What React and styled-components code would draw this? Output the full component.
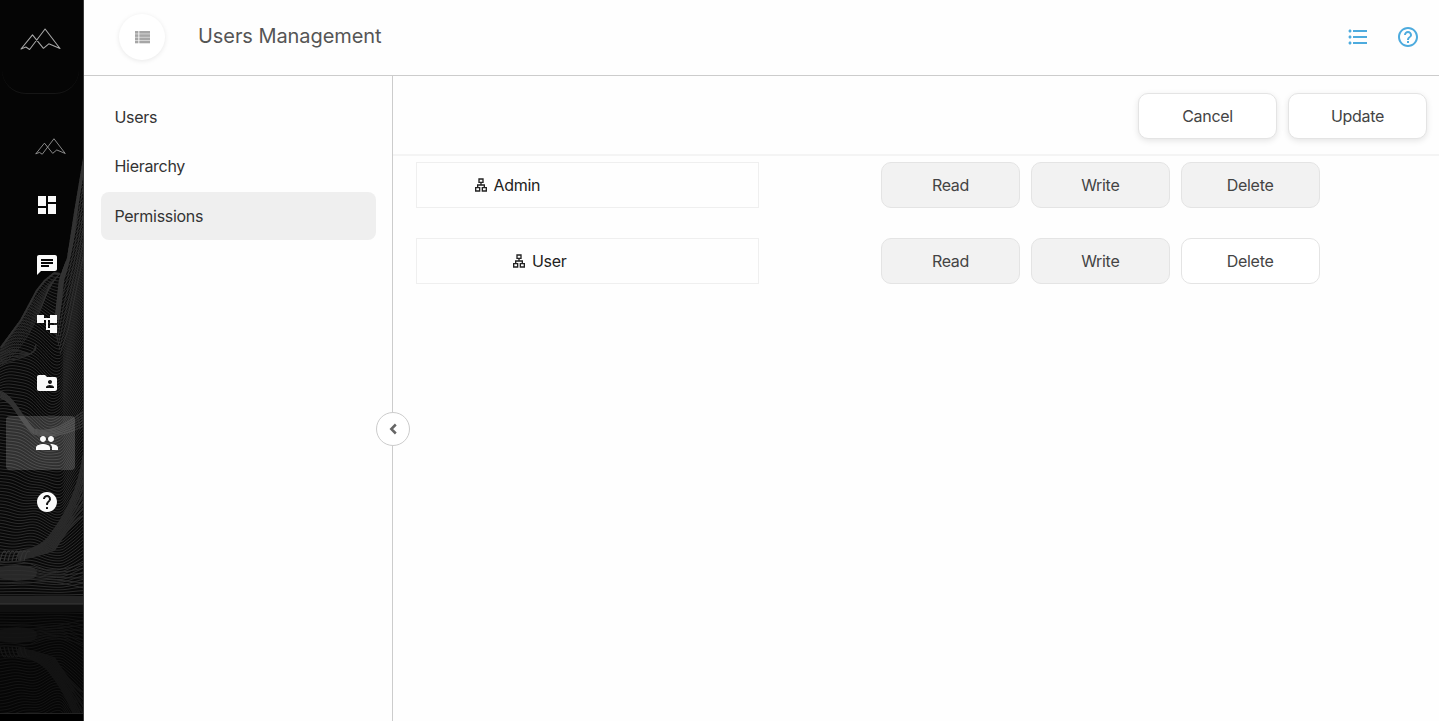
import React, { useState } from 'react';
import styled, { createGlobalStyle } from 'styled-components';
import {
  MdDashboard, MdChat, MdAccountTree, MdFolderShared, MdPeople, MdHelp,
  MdHelpOutline, MdFormatListBulleted, MdOutlineLan,
} from 'react-icons/md';

const GlobalStyle = createGlobalStyle`
  * { box-sizing: border-box; }
  body { margin: 0; background: #fefefe; font-family: Inter, 'Liberation Sans', sans-serif; letter-spacing: -0.3px; color: #333; }
  button { font-family: inherit; letter-spacing: inherit; cursor: pointer; }
`;

const Layout = styled.div`
  display: flex;
  width: 100%; height: 100vh;
  overflow: hidden;
`;

const Sidebar = styled.aside`
  position: relative;
  flex: 0 0 84px;
  background: #050505;
  border-right: 1px solid #3a3a3a;
  overflow: hidden;
`;

const Backdrop = styled.svg`
  position: absolute; top: 0; left: 0;
  width: 84px; height: 721px;
`;

const Brand = styled.div`
  position: relative;
  display: flex; justify-content: center; align-items: center;
  width: 77px; height: 94px;
  margin-left: 2px;
  padding: 0 1px 14px 0;
  border-bottom: 1px solid #161616;
  border-radius: 0 0 24px 24px;
`;

const Menu = styled.nav`
  position: relative;
  display: flex; flex-direction: column;
  gap: 5px;
  padding: 26px 8px 0 6px;
`;

const MenuItem = styled.a`
  display: flex; justify-content: center; align-items: center;
  height: ${props => (props.$logo ? '53px' : '54.4px')};
  padding-left: ${props => (props.$logo ? '20px' : '13px')};
  border-radius: 4px;
  color: #fafafa;
  background: ${props => (props.$active ? 'rgba(255, 255, 255, 0.17)' : 'transparent')};
`;

const Main = styled.div`
  flex: 1;
  display: flex; flex-direction: column;
  min-width: 0;
`;

const Header = styled.header`
  display: flex; align-items: center;
  height: 76px;
  padding: 0 19px 1px 35px;
  border-bottom: 1px solid #ccc;
`;

const RoundButton = styled.button`
  display: flex; justify-content: center; align-items: center;
  width: 46px; height: 46px;
  padding: 0;
  border: none; border-radius: 50%;
  background: #fff;
  color: #a6a6a6;
  box-shadow: 0 1px 5px rgba(0, 0, 0, 0.09);
`;

const Title = styled.h1`
  flex: 1;
  margin: 0 0 2px 33px;
  font-size: 20px; font-weight: 400;
  letter-spacing: -0.07px;
  color: #555;
`;

const HeaderActions = styled.div`
  display: flex; gap: 26px;
  color: #4dabde;
`;

const Body = styled.div`
  flex: 1;
  display: flex;
  min-height: 0;
`;

const Panel = styled.div`
  position: relative;
  flex: 0 0 309px;
  display: flex; flex-direction: column;
  gap: 1.3px;
  padding: 16.5px 16px 0 17px;
  border-right: 1px solid #ccc;
`;

const PanelItem = styled.div`
  display: flex; align-items: center;
  height: 48.3px;
  padding-left: 13.5px;
  border-radius: 8px;
  font-size: 16px;
  cursor: pointer;
  background: ${props => (props.$active ? '#efefef' : 'transparent')};
`;

const CollapseButton = styled.button`
  position: absolute; top: 336px; right: -18px;
  display: flex; justify-content: center; align-items: center;
  width: 34px; height: 34px;
  padding: 0;
  border: 1px solid #ccc; border-radius: 50%;
  background: #fff;
  color: #666;
`;

const Content = styled.main`
  flex: 1;
  min-width: 0;
`;

const Toolbar = styled.div`
  display: flex; justify-content: flex-end; align-items: center;
  gap: 11px;
  height: 80px;
  padding: 2px 12px 0 0;
  border-bottom: 2px solid #f4f4f4;
`;

const Button = styled.button`
  width: 139px; height: 46px;
  padding: 0;
  border: 1px solid #e4e4e4;
  border-radius: 10px;
  background: ${props => (props.$on ? '#f2f2f2' : '#fff')};
  box-shadow: ${props => (props.$raised ? '0 2px 6px rgba(0, 0, 0, 0.1)' : 'none')};
  font-size: 16px;
  color: #444;
`;

const RoleList = styled.div`
  display: flex; flex-direction: column;
  gap: 30px;
  padding: 6px 0 0 23px;
`;

const RoleRow = styled.div`
  display: flex; align-items: center;
`;

const RoleCard = styled.div`
  display: flex; align-items: center;
  gap: 5px;
  width: 343px; height: 46px;
  padding-left: ${props => 17 + props.$level * 38.5}px;
  border: 1px solid #efefef;
  font-size: 16px;
  color: #222;
`;

const Permissions = styled.div`
  display: flex;
  gap: 10.8px;
  margin-left: 122px;
`;

const Peaks = ({ width }) => (
  <svg width={width} viewBox="0 0 42 23" fill="none" stroke="currentColor" strokeWidth="1.1" strokeLinejoin="round" color="#a8a8a8">
    <path d="M1 21.5 L12.8 7 L24 20.8 L29.5 16.2 L41 21 L25.7 1 L9.8 22 L6 19.5 Z" />
  </svg>
);

const ListRows = () => (
  <svg width="15" height="13" viewBox="0 0 15 13" fill="currentColor">
    {[0, 3.2, 6.4, 9.6].map(y => (
      <g key={y}>
        <rect x="0" y={y} width="3.4" height="2.7" />
        <rect x="4.3" y={y} width="10.7" height="2.7" />
      </g>
    ))}
  </svg>
);

// contour lines of the landscape, flattening out towards the horizon
const contour = (base) => {
  const calm = Math.max(0, Math.min(1, (596 - base) / 110));
  const pts = [];
  for (let x = 0; x <= 84; x += 3) {
    const dip = 17 * Math.exp(-((x - 56) ** 2) / 380);
    const roll = 3.5 * Math.sin(x / 10 + base / 41) + 1.2 * Math.sin(x / 5 + base / 23);
    const slope = Math.max(0, x - 62) * -1.1;
    pts.push(`${x} ${(base + (dip + roll + slope) * calm).toFixed(1)}`);
  }
  return `M${pts.join(' L')}`;
};

const contours = [];
for (let y = 170; y < 604; y += 3.1) contours.push(contour(y));

// a ridge is a bundle of thin strands that fan out along its way
const strands = (count, draw) => Array.from({ length: count }, (_, i) => draw(i));

const Landscape = () => (
  <Backdrop viewBox="0 0 84 721" fill="none">
    <defs>
      <clipPath id="hills">
        <path d="M84 152 L74 212 L67 258 L61 273 L54 272 L44 280 L36 290 L20 320 L0 347 V604 H84 Z" />
      </clipPath>
      <clipPath id="water"><rect y="604" width="84" height="109" /></clipPath>
      <g id="terrain" clipPath="url(#hills)">
        <rect width="84" height="604" fill="#080808" />
        {contours.map((d, i) => <path key={i} d={d} stroke="#353535" strokeWidth="0.8" />)}
        <path d="M84 152 L76 206 Q70 258 62 278 L57 320" stroke="#323232" strokeWidth="5" />
        {strands(7, i => (
          <path key={i} d={`M84 ${168 + i * 14} Q${71 + i} ${250 + i * 6} ${59 + i * 1.5} ${282 + i * 8} L${54 + i} ${330 + i * 4}`} stroke="#363636" strokeWidth="0.8" />
        ))}
        <path d="M60 273 L54 272 L44 280 L36 290 L20 320 L0 347" stroke="#303030" strokeWidth="4" />
        {strands(12, i => (
          <path key={i} d={`M${60 - i} ${274 + i} Q${38 - i * 0.5} ${288 + i * 5} ${0} ${350 + i * 1.5}`} stroke="#303030" strokeWidth="0.7" />
        ))}
        {strands(6, i => (
          <path key={i} d={`M0 ${354 + i * 2} Q14 ${346 + i * 3} 24 ${352 + i} T36 ${344 + i}`} stroke="#2e2e2e" strokeWidth="0.9" />
        ))}
        {strands(6, i => (
          <path key={i} d={`M0 ${391 + i * 1.3} C14 ${396 + i} 22 ${418 + i * 1.6} 34 ${429 + i} C50 ${434 + i} 66 ${424 + i * 2} 84 ${411 + i * 3}`} stroke="#333" strokeWidth="1.3" />
        ))}
        {strands(9, i => (
          <path key={i} d={`M84 ${452 + i * 8} C78 ${492 + i * 3} 66 ${515 + i * 2} ${48 + i * 0.8} ${538 + i * 1.5} C38 ${548 + i} 28 ${550 + i} 18 ${552 + i}`} stroke="#2b2b2b" strokeWidth="1.7" />
        ))}
        {strands(7, i => (
          <path key={i} d={`M${i * 4} 561 Q${i * 4 + 3} 548 ${i * 4 + 6} 552`} stroke="#353535" strokeWidth="1.2" />
        ))}
        <path d="M0 568 Q18 562 34 568 Q40 573 34 578 Q16 584 0 578 Z" fill="#282828" />
        {strands(6, i => (
          <path key={i} d={`M0 ${563 + i * 4} Q24 ${559 + i * 5} 38 ${567 + i * 3} T84 ${563 + i * 5}`} stroke="#303030" strokeWidth="0.9" />
        ))}
        <rect y="596" width="84" height="8" fill="#242424" />
      </g>
    </defs>
    <use href="#terrain" />
    <g clipPath="url(#water)">
      <use href="#terrain" transform="translate(0 1208) scale(1 -1)" opacity="0.38" />
    </g>
    <path d="M0 604 H84" stroke="#393939" strokeWidth="1.2" />
    <path d="M0 713.5 H84" stroke="#222" />
    <rect y="714" width="84" height="7" fill="#000" />
  </Backdrop>
);

const menu = [MdDashboard, MdChat, MdAccountTree, MdFolderShared, MdPeople, MdHelp];

const App = () => {
  const [section, setSection] = useState('Permissions');
  const [roles, setRoles] = useState([
    { name: 'Admin', level: 1, rights: { Read: true, Write: true, Delete: true } },
    { name: 'User', level: 2, rights: { Read: true, Write: true, Delete: false } },
  ]);

  const toggle = (name, right) => {
    setRoles(roles.map(r => (r.name === name ? { ...r, rights: { ...r.rights, [right]: !r.rights[right] } } : r)));
  };

  return (
    <Layout>
      <GlobalStyle />
      <Sidebar>
        <Landscape />
        <Brand><Peaks width={41} /></Brand>
        <Menu>
          <MenuItem $logo><Peaks width={31} /></MenuItem>
          {menu.map((Icon, i) => (
            <MenuItem key={i} $active={Icon === MdPeople}><Icon size={24} /></MenuItem>
          ))}
        </Menu>
      </Sidebar>

      <Main>
        <Header>
          <RoundButton><ListRows /></RoundButton>
          <Title>Users Management</Title>
          <HeaderActions>
            <MdFormatListBulleted size={24} />
            <MdHelpOutline size={24} />
          </HeaderActions>
        </Header>

        <Body>
          <Panel>
            {['Users', 'Hierarchy', 'Permissions'].map(item => (
              <PanelItem key={item} $active={item === section} onClick={() => setSection(item)}>{item}</PanelItem>
            ))}
            <CollapseButton>
              <svg width="8" height="12" viewBox="0 0 8 12" fill="none" stroke="currentColor" strokeWidth="2.5">
                <path d="M6.8 1.5 L2.3 6 L6.8 10.5" />
              </svg>
            </CollapseButton>
          </Panel>

          <Content>
            <Toolbar>
              <Button $raised>Cancel</Button>
              <Button $raised>Update</Button>
            </Toolbar>
            <RoleList>
              {roles.map(role => (
                <RoleRow key={role.name}>
                  <RoleCard $level={role.level}>
                    <MdOutlineLan size={16} />
                    {role.name}
                  </RoleCard>
                  <Permissions>
                    {Object.keys(role.rights).map(right => (
                      <Button key={right} $on={role.rights[right]} onClick={() => toggle(role.name, right)}>{right}</Button>
                    ))}
                  </Permissions>
                </RoleRow>
              ))}
            </RoleList>
          </Content>
        </Body>
      </Main>
    </Layout>
  );
};

export default App;
